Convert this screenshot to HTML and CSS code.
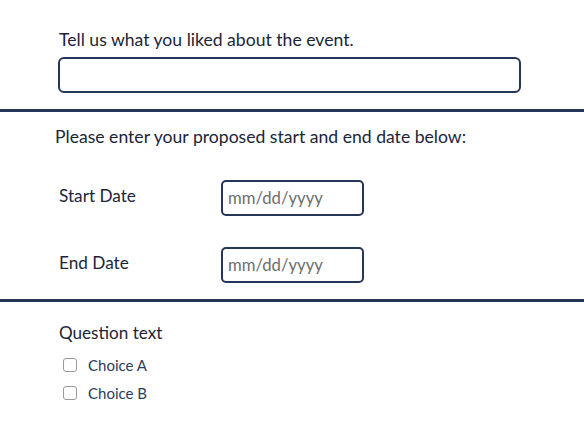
FILE: index.html
```html
<!DOCTYPE html>
<html>
<head>
<meta charset="utf-8">
<link rel="stylesheet" href="styles.css">
</head>
<body>
<section class="block block-text">
  <label class="q-label">Tell us what you liked about the event.</label>
  <div class="text-input"></div>
</section>
<section class="block block-dates">
  <p class="intro">Please enter your proposed start and end date below:</p>
  <div class="date-row">
    <span class="date-label">Start Date</span>
    <div class="date-input">mm/dd/yyyy</div>
  </div>
  <div class="date-row">
    <span class="date-label">End Date</span>
    <div class="date-input">mm/dd/yyyy</div>
  </div>
</section>
<section class="block block-choices">
  <div class="q-label q-small">Question text</div>
  <ul class="choices">
    <li class="choice"><span class="box"></span><span class="choice-text">Choice A</span></li>
    <li class="choice"><span class="box"></span><span class="choice-text">Choice B</span></li>
  </ul>
</section>
</body>
</html>
```
FILE: styles.css
```css
html, body {
  margin: 0;
  padding: 0;
  background: #ffffff;
}
body {
  font-family: Lato, "Liberation Sans", sans-serif;
  color: #1c2538;
  width: 584px;
}
.block {
  border-bottom: 3px solid #253659;
}
.block-text {
  padding: 28px 63px 16px 58px;
}
.q-label {
  display: block;
  font-size: 17.6px;
  line-height: 24px;
  padding-left: 1px;
}
.q-small {
  font-size: 17.1px;
}
.text-input {
  margin-top: 5px;
  height: 32px;
  border: 2px solid #253659;
  border-radius: 6px;
}
.block-dates {
  padding: 14px 0 16px 55px;
}
.intro {
  margin: 0 0 32px 0;
  font-size: 17.6px;
  line-height: 22px;
}
.date-row {
  display: flex;
  align-items: center;
  height: 36px;
  margin-bottom: 31px;
}
.date-row:last-child {
  margin-bottom: 0;
}
.date-label {
  width: 162px;
  padding-left: 4px;
  font-size: 17.2px;
  line-height: 24px;
  margin-top: -4px;
}
.date-input {
  box-sizing: border-box;
  width: 143px;
  height: 36px;
  border: 2px solid #253659;
  border-radius: 5px;
  padding-left: 5px;
  font-size: 16.7px;
  line-height: 32px;
  color: #6e6e6e;
}
.block-choices {
  border-bottom: none;
  padding: 19px 0 0 58px;
}
.choices {
  list-style: none;
  margin: 6px 0 0 0;
  padding: 0;
}
.choice {
  display: flex;
  align-items: center;
  height: 28px;
  padding-left: 5px;
}
.box {
  box-sizing: border-box;
  width: 14px;
  height: 14px;
  border: 1px solid #9a9a9a;
  border-radius: 3px;
  margin-right: 11px;
}
.choice-text {
  font-size: 15px;
  color: #2c3b5e;
  margin-top: -1px;
}
```
